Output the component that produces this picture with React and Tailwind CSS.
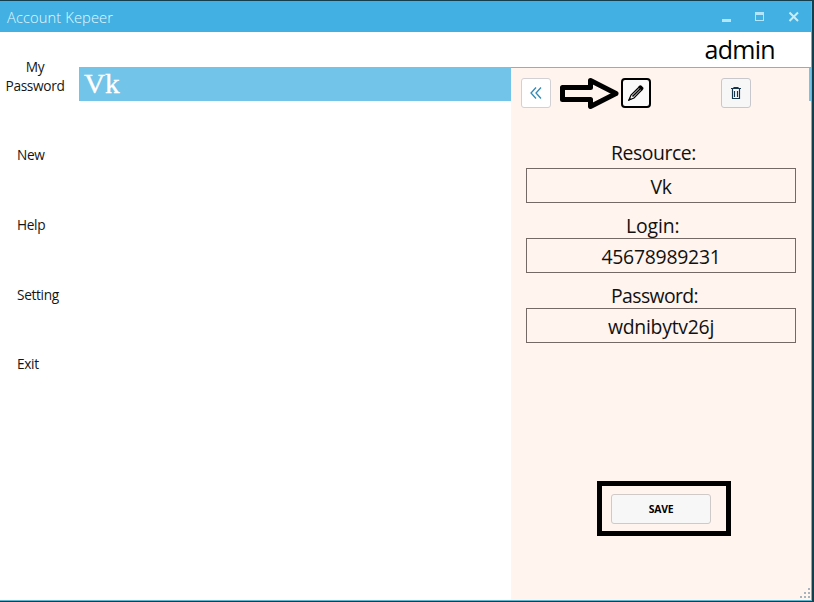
const NAV_ITEMS = ["New", "Help", "Setting", "Exit"];

function TitleBar() {
  return (
    <header className="flex h-[31px] shrink-0 items-center bg-[#42b0e2] pl-[7px] text-[#e3f8ff]">
      <h1 className="grow text-[14.7px] leading-5 font-light tracking-[0.1px]">Account Kepeer</h1>
      <svg width="99" height="31" viewBox="712 1 99 31" fill="none">
        <rect x="722" y="19" width="9" height="3" fill="#b5e5f8" />
        <rect x="755.5" y="12.5" width="8" height="8" stroke="#b5e5f8" />
        <rect x="755" y="12" width="9" height="3" fill="#b5e5f8" />
        <path d="M789.5 12.5 798 21M798 12.5 789.5 21" stroke="#c5eefb" strokeWidth="2" />
      </svg>
    </header>
  );
}

function Sidebar() {
  return (
    <nav className="flex w-[79px] shrink-0 flex-col text-[13.7px] leading-[19px] tracking-[-0.35px] text-[#151515]">
      <div className="mt-[25px] mb-[50px] w-[70px] text-center">My<br />Password</div>
      <div className="flex flex-col gap-[50.8px] pl-[17px]">
        {NAV_ITEMS.map((item) => <span key={item}>{item}</span>)}
      </div>
    </nav>
  );
}

function PencilIcon() {
  return (
    <svg width="18" height="18" viewBox="0 0 18 18" fill="none" stroke="#000">
      <path d="M2 16 4 11 12 3.2 14.8 6 7 14Z" strokeWidth="1.2" />
      <path d="M5.5 12.5 13.3 4.7" strokeWidth="1.5" />
      <path d="M11.4 2.4 12.6 1.5Q13.6 1 14.6 1.8L16.2 3.4Q16.8 4.4 16.2 5.2L15.4 6.2Z" fill="#000" stroke="none" />
      <path d="M1 17 2.4 13.6 4.6 15.6Z" fill="#000" stroke="none" />
    </svg>
  );
}

function TrashIcon() {
  return (
    <svg width="12" height="14" viewBox="0 0 12 14" fill="none" stroke="#17364b">
      <path d="M1 2.5H11M4 2V1.5H8V2M2.5 3V12.5H9.5V3M4.5 5V11M7.5 5V11" strokeWidth="1.15" />
    </svg>
  );
}

function Toolbar() {
  return (
    <div className="flex pt-[10px] pl-[10px]">
      <button className="flex size-[30px] items-center justify-center rounded-[3px] border border-[#d2d0d2] bg-white">
        <svg width="12" height="12" viewBox="0 0 12 12" fill="none" stroke="#3389b5" strokeWidth="1.3">
          <path d="M6 .5 1 6 6 11.5M11 .5 6 6 11 11.5" />
        </svg>
      </button>
      <svg className="ml-[9px] w-[60px]" width="60" height="32" viewBox="0 0 60 32" fill="none">
        <path d="M2.5 9.5H30.5V2.5L56 15.5 30.5 28.5V21.5H2.5Z" stroke="#000" strokeWidth="5" strokeLinejoin="round" />
      </svg>
      <button className="ml-px flex size-[30px] items-center justify-center rounded-[4px] border-2 border-black bg-[#fafafa]">
        <PencilIcon />
      </button>
      <button className="ml-[70px] flex size-[30px] items-center justify-center rounded-[3px] border border-[#c8c8cc] bg-[#f7f7f8]">
        <TrashIcon />
      </button>
    </div>
  );
}

function Value({ children }) {
  return (
    <div className="h-[35px] w-[270px] border border-[#756966] text-center leading-[36px]">{children}</div>
  );
}

function DetailPanel() {
  return (
    <section className="flex w-[300px] shrink-0 flex-col bg-[#fff4ee] text-[19.4px] tracking-[-0.34px] text-[#111]">
      <Toolbar />
      <div className="mt-[28px] flex flex-col pl-[15px]">
        <div className="h-[30px] pl-[85px] leading-[30px] tracking-[-0.45px]">Resource:</div>
        <Value>Vk</Value>
        <div className="h-[35px] pt-[8px] pl-[100px] leading-[30px] tracking-[-0.1px]">Login:</div>
        <Value><span className="tracking-[-0.25px]">45678989231</span></Value>
        <div className="h-[35px] pt-[8px] pl-[85px] leading-[30px] tracking-[-0.6px]">Password:</div>
        <Value><span className="tracking-[-0.25px]">wdnibytv26j</span></Value>
      </div>
      <div className="mt-[138px] ml-[86px] h-[55px] w-[134px] border-[5px] border-black pt-[8px] pl-[9px]">
        <button className="flex h-[30px] w-[100px] items-center justify-center rounded-[3px] border border-[#cfc9c8] bg-[#f7f7f7] pt-[2px] text-[10.4px] font-bold tracking-[-0.2px] text-black">
          SAVE
        </button>
      </div>
      <svg className="mt-auto ml-auto" width="12" height="14" viewBox="0 0 12 14" fill="#a7b4be">
        <path d="M9 2h2v2H9zM5 6h2v2H5zM9 6h2v2H9zM1 10h2v2H1zM5 10h2v2H5zM9 10h2v2H9z" />
      </svg>
    </section>
  );
}

export default function App() {
  return (
    <div className="flex h-[602px] w-[814px] flex-col bg-[#153e4c] pt-px font-['Open_Sans','Noto_Sans',sans-serif]">
      <div className="flex h-[600px] w-[812px] flex-col border-r border-b border-[#64b5cf] bg-white">
        <TitleBar />
        <div className="flex grow">
          <Sidebar />
          <main className="flex grow flex-col">
            <div className="h-[35px] pr-[36px] text-right text-[25px] leading-[35px] tracking-[-0.7px] text-black">admin</div>
            <div className="flex grow">
              <div className="grow">
                <div className="h-[34px] bg-[#72c4e8] pl-[5px] font-['Liberation_Serif',serif] text-[27px] leading-[34px] text-white [-webkit-text-stroke:0.4px_white]">
                  <span className="inline-block origin-left scale-x-[1.08]">Vk</span>
                </div>
              </div>
              <div className="flex border-t border-[#73b9cf] bg-[#fff4ee]">
                <DetailPanel />
                <div className="-ml-[2px] h-[33px] w-[2px] bg-[#72c4e8]" />
              </div>
            </div>
          </main>
        </div>
      </div>
    </div>
  );
}
